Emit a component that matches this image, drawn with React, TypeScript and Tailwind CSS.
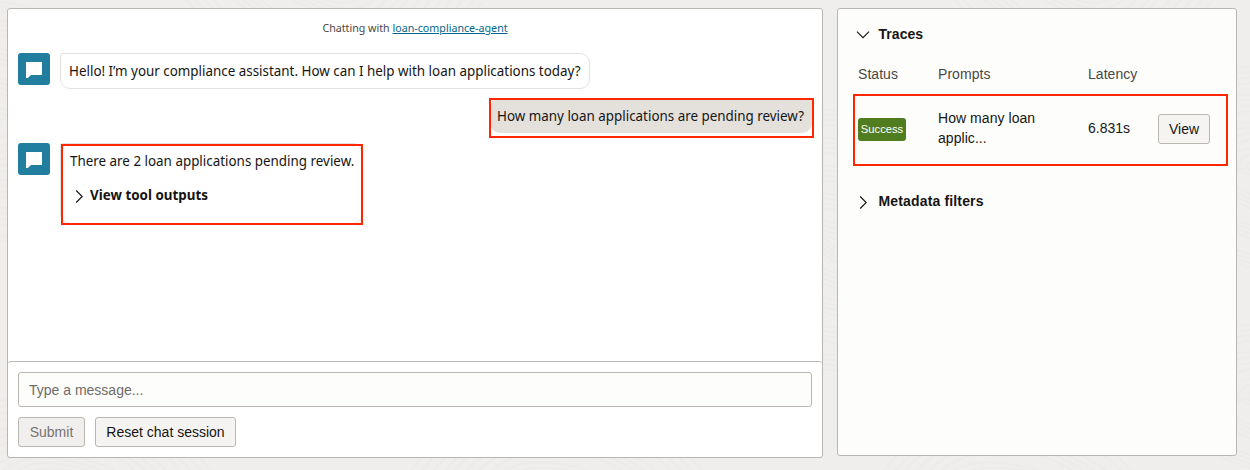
import React from "react";

function Backdrop() {
  const rings = (cx: number, cy: number, count: number) =>
    Array.from({ length: count }, (_, i) => {
      const r = 8 + i * 7;
      const w = 5 + (i % 4) * 2;
      return (
        <path
          key={`${cx}-${i}`}
          d={`M${cx - r * 1.5} ${cy} Q${cx - r - w} ${cy - r} ${cx} ${cy - r + w} T${cx + r * 1.5} ${cy} Q${cx + r} ${cy + r + w} ${cx} ${cy + r - w} T${cx - r * 1.5} ${cy}`}
        />
      );
    });
  return (
    <svg
      className="absolute inset-0 h-full w-full"
      viewBox="0 0 1250 470"
      fill="none"
      stroke="#ecebe9"
      strokeWidth="2"
      aria-hidden="true"
    >
      {rings(-20, 120, 18)}
      {rings(60, 500, 16)}
      {rings(330, -30, 16)}
      {rings(560, 510, 16)}
      {rings(830, 240, 20)}
      {rings(1010, 510, 14)}
      {rings(1080, -30, 14)}
      {rings(1270, 170, 16)}
      {rings(1270, 400, 12)}
    </svg>
  );
}

function Chevron({ open = false }: { open?: boolean }) {
  return open ? (
    <svg width="14" height="14" viewBox="0 0 14 14" fill="none" stroke="#161513" strokeWidth="1.1">
      <path d="M1 4.7L7 10.7L13 4.7" />
    </svg>
  ) : (
    <svg
      width="14"
      height="15"
      viewBox="0 0 14 15"
      fill="none"
      stroke="#161513"
      strokeWidth="1.1"
    >
      <path d="M4.2 2.5L10.2 8.5L4.2 14.5" />
    </svg>
  );
}

function Avatar() {
  return (
    <div className="flex size-8 shrink-0 items-center justify-center rounded-[3px] bg-[#227e9e] pt-[2px]">
      <svg width="16" height="16" viewBox="0 0 16 16" fill="white">
        <path d="M0 0H16V13H5L1.8 16H0Z" />
      </svg>
    </div>
  );
}

const chatFont = "font-['Noto_Sans','Open_Sans',sans-serif]";

export default function App() {
  return (
    <div className="relative h-[470px] w-[1250px] overflow-hidden bg-[#f0eeed] font-['Liberation_Sans',Arial,sans-serif] text-[#161513]">
      <Backdrop />
      <main className="relative flex items-start gap-[14px] pt-2 pl-[7px]">
        <section className="flex h-[450px] w-[816px] flex-col rounded-[3px] border border-[#b9b5b0] bg-white">
          <div className={`flex h-[352px] flex-col px-[10px] ${chatFont}`}>
            <p className="mt-[11px] h-4 scale-x-[0.945] text-center text-[11.3px] leading-4 text-[#4a4845]">
              Chatting with{" "}
              <a href="#" className="text-[#00688c] underline">
                loan-compliance-agent
              </a>
            </p>
            <div className="mt-[17px] flex gap-[10px]">
              <Avatar />
              <div className="h-9 w-[530px] rounded-[10px] rounded-tl-[2px] border border-[#e2e2e1] pl-2 text-[15px] leading-[33px] whitespace-nowrap">
                <p className="origin-left scale-x-[0.893]">
                  Hello! I’m your compliance assistant. How can I help with loan applications today?
                </p>
              </div>
            </div>
            <div className="mt-[9px] flex justify-end">
              <div className="relative h-[35px] w-[322px] rounded-[10px] rounded-tr-[2px] bg-[#e4e1dd] pl-[7px] text-[15px] leading-[35px] whitespace-nowrap">
                <p className="origin-left scale-x-[0.893]">How many loan applications are pending review?</p>
                <div className="absolute top-0 -left-px h-10 w-[325px] border-2 border-[#ff2600]" />
              </div>
            </div>
            <div className="mt-[10px] flex gap-[10px]">
              <Avatar />
              <div className="relative h-[81px] w-[303px] rounded-[10px] rounded-tl-[2px] border border-[#e2e2e1] pl-[9px] text-[15px] whitespace-nowrap">
                <p className="h-[34px] origin-left scale-x-[0.893] leading-[33px]">
                  There are 2 loan applications pending review.
                </p>
                <div className="flex h-[34px] items-center pl-[2px]">
                  <Chevron />
                  <span className="ml-1 origin-left scale-x-[0.893] pb-[2px] font-bold">View tool outputs</span>
                </div>
                <div className="absolute top-0 left-0 h-[81px] w-[302px] border-2 border-[#ff2600]" />
              </div>
            </div>
          </div>
          <div className="flex-1 rounded-[3px] border-t border-[#b9b5b0] px-[10px] pt-[10px]">
            <input
              className="block h-[35px] w-[794px] rounded-[3px] border border-[#bcb6b1] bg-[#fdfdfb] px-[10px] text-[14px] placeholder:text-[#6f6b68] placeholder:opacity-100"
              placeholder="Type a message..."
            />
            <div className="mt-[10px] flex gap-[10px] text-[14px]">
              <button className="h-[30px] w-[67px] rounded-[3px] border border-[#bcb6b1] bg-[#f1efed] text-[#777370]">
                Submit
              </button>
              <button className="h-[30px] w-[141px] rounded-[3px] border border-[#bcb6b1] bg-[#f5f4f2]">
                Reset chat session
              </button>
            </div>
          </div>
        </section>

        <aside className="h-[448px] w-[400px] rounded-[3px] border border-[#b9b5b0] bg-[#fdfdfb] pl-[18px] text-[14px]">
          <h2 className="mt-[15px] flex h-5 items-center font-bold">
            <Chevron open />
            <span className="ml-[8.5px] tracking-[0.05px]">Traces</span>
          </h2>
          <div className="relative mt-5 ml-[2px] w-[363px]">
            <div className="grid h-[32px] grid-cols-[80px_150px_70px_63px] border-b border-[#bcb6b1] leading-5 tracking-[0.05px] text-[#4a4845]">
              <span>Status</span>
              <span>Prompts</span>
              <span>Latency</span>
            </div>
            <div className="grid h-[66px] grid-cols-[80px_150px_70px_63px] items-center">
              <span className="flex h-[23px] w-12 items-center justify-center rounded-[3px] bg-[#4f7d20] text-[11.2px] text-white">
                Success
              </span>
              <span className="w-[110px] pb-[2px] leading-5 tracking-[0.05px]">How many loan applic...</span>
              <span className="-mt-px">6.831s</span>
              <button className="h-[30px] w-[52px] rounded-[3px] border border-[#bcb6b1] bg-[#f5f4f2]">
                View
              </button>
            </div>
            <div className="absolute top-[30px] -left-[5px] h-[72px] w-[375px] border-2 border-[#ff2600]" />
          </div>
          <h2 className="mt-[29px] flex h-5 items-center font-bold">
            <Chevron />
            <span className="ml-[8.5px] tracking-[0.15px]">Metadata filters</span>
          </h2>
        </aside>
      </main>
    </div>
  );
}
